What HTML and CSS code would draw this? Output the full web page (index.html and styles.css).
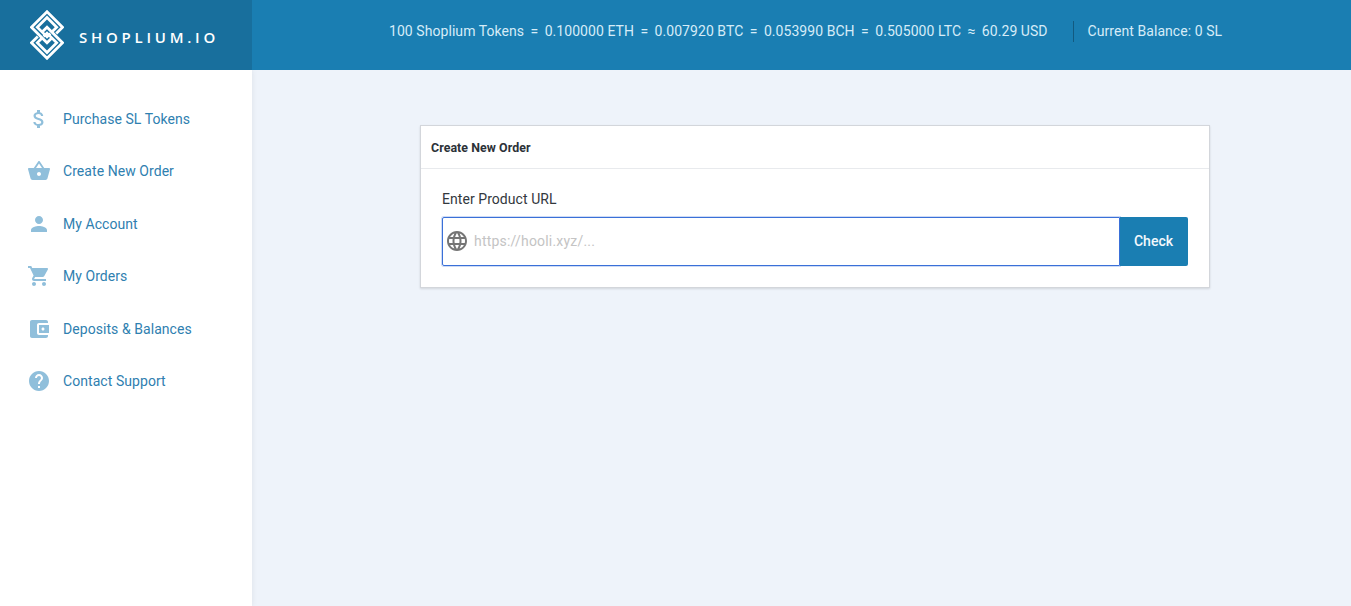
FILE: index.html
```html
<!DOCTYPE html>
<html>
<head>
    <title>Shoplium.io - Create New Order</title>
    <link rel="stylesheet" href="styles.css">
</head>
<body>
    <header class="topbar">
        <div class="brand">
            <svg class="brand-logo" width="34" height="50" viewBox="-1.5 -1.5 35 51" fill="none" stroke="#fff" stroke-width="2.8">
                <path d="M25.5 22.5 L32 16 L16 0 L0 16 L16 32 L21.5 26.5"/>
                <path d="M21 21 L26 16 L16 6 L6 16 L16 26 L19.5 22.5"/>
                <path d="M6.5 25.5 L0 32 L16 48 L32 32 L16 16 L10.5 21.5"/>
                <path d="M11 27 L6 32 L16 42 L26 32 L16 22 L12.5 25.5"/>
            </svg>
            <span class="brand-name">SHOPLIUM.IO</span>
        </div>
        <div class="rates">
            <span>100 Shoplium Tokens</span><span class="sep">=</span>
            <span>0.100000 ETH</span><span class="sep">=</span>
            <span>0.007920 BTC</span><span class="sep">=</span>
            <span>0.053990 BCH</span><span class="sep">=</span>
            <span>0.505000 LTC</span><span class="sep">≈</span>
            <span>60.29 USD</span>
            <span class="balance">Current Balance: 0 SL</span>
        </div>
    </header>

    <div class="layout">
        <nav class="sidebar">
            <a class="nav-item" href="#">
                <svg class="nav-icon" width="24" height="24" viewBox="0 0 24 24"><path d="M11.8 10.9c-2.27-.59-3-1.2-3-2.15 0-1.09 1.01-1.85 2.7-1.85 1.78 0 2.44.85 2.5 2.1h2.21c-.07-1.72-1.12-3.3-3.21-3.81V3h-3v2.16c-1.94.42-3.5 1.68-3.5 3.61 0 2.31 1.91 3.46 4.7 4.13 2.5.6 3 1.48 3 2.41 0 .69-.49 1.79-2.7 1.79-2.06 0-2.87-.92-2.98-2.1h-2.2c.12 2.19 1.76 3.42 3.68 3.83V21h3v-2.15c1.95-.37 3.5-1.5 3.5-3.55 0-2.84-2.43-3.81-4.7-4.4z"/></svg>
                <span>Purchase SL Tokens</span>
            </a>
            <a class="nav-item" href="#">
                <svg class="nav-icon" width="24" height="24" viewBox="0 0 24 24"><path d="M17.21 9l-4.38-6.56c-.19-.28-.51-.42-.83-.42-.32 0-.64.14-.83.43L6.79 9H2c-.55 0-1 .45-1 1 0 .09.01.18.04.27l2.54 9.27c.23.84 1 1.46 1.92 1.46h13c.92 0 1.69-.62 1.93-1.46l2.54-9.27L23 10c0-.55-.45-1-1-1h-4.79zM9 9l3-4.4L15 9H9zm3 8c-1.1 0-2-.9-2-2s.9-2 2-2 2 .9 2 2-.9 2-2 2z"/></svg>
                <span>Create New Order</span>
            </a>
            <a class="nav-item" href="#">
                <svg class="nav-icon" width="24" height="24" viewBox="0 0 24 24"><path d="M12 12c2.21 0 4-1.79 4-4s-1.79-4-4-4-4 1.79-4 4 1.79 4 4 4zm0 2c-2.67 0-8 1.34-8 4v2h16v-2c0-2.66-5.33-4-8-4z"/></svg>
                <span>My Account</span>
            </a>
            <a class="nav-item" href="#">
                <svg class="nav-icon" width="24" height="24" viewBox="0 0 24 24"><path d="M7 18c-1.1 0-1.99.9-1.99 2S5.9 22 7 22s2-.9 2-2-.9-2-2-2zM1 2v2h2l3.6 7.59-1.35 2.45c-.16.28-.25.61-.25.96 0 1.1.9 2 2 2h12v-2H7.42c-.14 0-.25-.11-.25-.25l.03-.12.9-1.63h7.45c.75 0 1.41-.41 1.75-1.03l3.58-6.49c.08-.14.12-.31.12-.48 0-.55-.45-1-1-1H5.21l-.94-2H1zm16 16c-1.1 0-1.99.9-1.99 2s.89 2 1.99 2 2-.9 2-2-.9-2-2-2z"/></svg>
                <span>My Orders</span>
            </a>
            <a class="nav-item" href="#">
                <svg class="nav-icon" width="24" height="24" viewBox="0 0 24 24"><path d="M21 18v1c0 1.1-.9 2-2 2H5c-1.11 0-2-.9-2-2V5c0-1.1.89-2 2-2h14c1.1 0 2 .9 2 2v1h-9c-1.11 0-2 .9-2 2v8c0 1.1.89 2 2 2h9zm-9-2h10V8H12v8zm4-2.5c-.83 0-1.5-.67-1.5-1.5s.67-1.5 1.5-1.5 1.5.67 1.5 1.5-.67 1.5-1.5 1.5z"/></svg>
                <span>Deposits &amp; Balances</span>
            </a>
            <a class="nav-item" href="#">
                <svg class="nav-icon" width="24" height="24" viewBox="0 0 24 24"><path d="M12 2C6.48 2 2 6.48 2 12s4.48 10 10 10 10-4.48 10-10S17.52 2 12 2zm1 17h-2v-2h2v2zm2.07-7.75l-.9.92C13.45 12.9 13 13.5 13 15h-2v-.5c0-1.1.45-2.1 1.17-2.83l1.24-1.26c.37-.36.59-.86.59-1.41 0-1.1-.9-2-2-2s-2 .9-2 2H8c0-2.21 1.79-4 4-4s4 1.79 4 4c0 .88-.36 1.68-.93 2.25z"/></svg>
                <span>Contact Support</span>
            </a>
        </nav>

        <main class="content">
            <section class="card">
                <h2 class="card-title">Create New Order</h2>
                <div class="card-body">
                    <label class="field-label" for="url">Enter Product URL</label>
                    <div class="url-row">
                        <div class="url-box">
                            <svg width="24" height="24" viewBox="0 0 24 24" fill="#757575"><path d="M11.99 2C6.47 2 2 6.48 2 12s4.47 10 9.99 10C17.52 22 22 17.52 22 12S17.52 2 11.99 2zm6.93 6h-2.95c-.32-1.25-.78-2.45-1.38-3.56 1.84.63 3.37 1.91 4.33 3.56zM12 4.04c.83 1.2 1.48 2.53 1.91 3.96h-3.82c.43-1.43 1.08-2.76 1.91-3.96zM4.26 14C4.1 13.36 4 12.69 4 12s.1-1.36.26-2h3.38c-.08.66-.14 1.32-.14 2 0 .68.06 1.34.14 2H4.26zm.82 2h2.95c.32 1.25.78 2.45 1.38 3.56-1.84-.63-3.37-1.9-4.33-3.56zm2.95-8H5.08c.96-1.66 2.49-2.93 4.33-3.56C8.81 5.55 8.35 6.75 8.03 8zM12 19.96c-.83-1.2-1.48-2.53-1.91-3.96h3.82c-.43 1.43-1.08 2.76-1.91 3.96zM14.34 14H9.66c-.09-.66-.16-1.32-.16-2 0-.68.07-1.35.16-2h4.68c.09.65.16 1.32.16 2 0 .68-.07 1.34-.16 2zm.25 5.56c.6-1.11 1.06-2.31 1.38-3.56h2.95c-.96 1.65-2.49 2.93-4.33 3.56zM16.36 14c.08-.66.14-1.32.14-2 0-.68-.06-1.34-.14-2h3.38c.16.64.26 1.31.26 2s-.1 1.36-.26 2h-3.38z"/></svg>
                            <input class="url-input" id="url" type="text" placeholder="https://hooli.xyz/...">
                        </div>
                        <button class="check-btn" type="button">Check</button>
                    </div>
                </div>
            </section>
        </main>
    </div>
</body>
</html>
```

FILE: styles.css
```css
* {
    box-sizing: border-box;
}

html, body {
    height: 100%;
}

body {
    margin: 0;
    display: flex;
    flex-direction: column;
    overflow: hidden;
    background-color: #eef3fa;
    font-family: Roboto, "Liberation Sans", sans-serif;
    font-size: 14px;
    letter-spacing: 0.06px;
}

.topbar {
    display: flex;
    flex: 0 0 70px;
    height: 70px;
    background-color: #1a7eb2;
    color: #d6ecf8;
    position: relative;
    z-index: 2;
}

.brand {
    display: flex;
    align-items: center;
    width: 252px;
    padding-left: 30px;
    background-color: #186f9d;
}

.brand-name {
    margin-left: 15px;
    margin-top: 4px;
    color: #fff;
    font-family: "Open Sans", sans-serif;
    font-size: 15px;
    font-weight: 600;
    letter-spacing: 3.75px;
}

.rates {
    display: flex;
    align-items: center;
    flex: 1;
    padding: 0 0 8px 137px;
    white-space: nowrap;
}

.sep {
    margin: 0 6.4px;
}

.balance {
    margin-left: 25px;
    padding: 2.5px 0 2.5px 14px;
    border-left: 1px solid #125a80;
}

.layout {
    display: flex;
    flex: 1;
}

.sidebar {
    display: flex;
    flex-direction: column;
    width: 252px;
    padding-top: 22.6px;
    background-color: #fff;
    box-shadow: 0 0 6px rgba(0, 0, 0, 0.08);
}

.nav-item {
    display: flex;
    align-items: center;
    height: 52.5px;
    padding-left: 26.5px;
    color: #2f80b0;
    text-decoration: none;
}

.nav-icon {
    fill: #90bfdb;
    margin-right: 12.5px;
}

.content {
    flex: 1;
    padding: 55px 141px 0 168px;
}

.card {
    background-color: #fff;
    border: 1px solid #d3d6db;
    box-shadow: 0 1px 2px rgba(0, 0, 0, 0.12);
}

.card-title {
    height: 43px;
    margin: 0;
    padding: 0 10px;
    border-bottom: 1px solid #e8eaed;
    color: #2c3238;
    font-size: 12.4px;
    font-weight: 700;
    line-height: 43px;
}

.card-body {
    padding: 22px 21px 21px;
}

.field-label {
    display: block;
    margin-bottom: 9px;
    color: #33383d;
    line-height: 17px;
}

.url-row {
    display: flex;
    height: 49px;
}

.url-box {
    display: flex;
    align-items: center;
    flex: 1;
    padding: 0 0 1px 2px;
    border: 1px solid #3a70d8;
    border-radius: 2px 0 0 2px;
    box-shadow: 0 0 0 1px rgba(58, 112, 216, 0.25);
}

.url-input {
    flex: 1;
    height: 100%;
    margin-left: 5px;
    border: 0;
    outline: 0;
    padding: 0;
    background: transparent;
    font-family: Roboto, sans-serif;
    font-size: 14px;
    letter-spacing: 0.2px;
}

.url-input::placeholder {
    color: #c4c4c4;
}

.check-btn {
    width: 68px;
    border: 0;
    border-radius: 0 2px 2px 0;
    padding: 0 1px 2px 0;
    background-color: #1a7eb2;
    color: #f2f8fc;
    font-family: Roboto, sans-serif;
    font-size: 14px;
    font-weight: 500;
    position: relative;
}
```
